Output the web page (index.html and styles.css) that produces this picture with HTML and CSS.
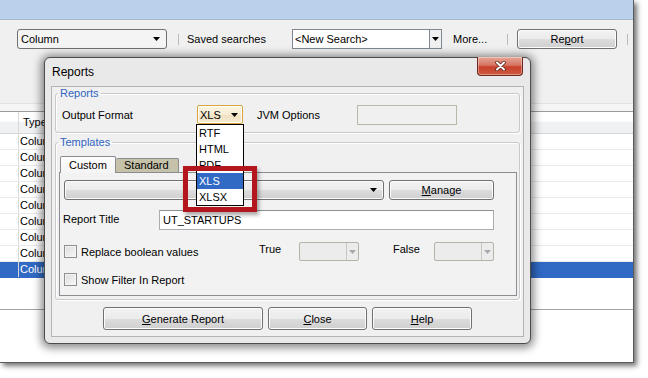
FILE: index.html
```html
<!DOCTYPE html>
<html lang="en">
<head>
    <meta charset="UTF-8">
    <title>Reports</title>
    <link rel="stylesheet" href="styles.css">
</head>
<body>
<div class="shot">
    <div class="window">
        <div class="caption"></div>

        <div class="toolbar">
            <div class="combo combo-column">
                <span class="combo-text">Column</span>
                <svg class="arrow" width="7" height="4" viewBox="0 0 7 4"><path d="M0 0h7L3.5 4z"/></svg>
            </div>
            <span class="sep sep-first"></span>
            <span class="tb-text saved">Saved searches</span>
            <div class="search">
                <span class="search-text">&lt;New Search&gt;</span>
                <span class="search-drop">
                    <svg class="arrow" width="7" height="4" viewBox="0 0 7 4"><path d="M0 0h7L3.5 4z"/></svg>
                </span>
            </div>
            <span class="tb-text more">More...</span>
            <span class="sep sep-report"></span>
            <button class="btn tb-report">Re<u>p</u>ort</button>
            <span class="sep sep-end"></span>
        </div>
        <div class="strip"></div>

        <div class="grid">
            <div class="grid-row grid-head"><span class="cell mark"></span><span class="cell">Type</span></div>
            <div class="grid-row"><span class="cell mark"></span><span class="cell">Column</span></div>
            <div class="grid-row"><span class="cell mark"></span><span class="cell">Column</span></div>
            <div class="grid-row"><span class="cell mark"></span><span class="cell">Column</span></div>
            <div class="grid-row"><span class="cell mark"></span><span class="cell">Column</span></div>
            <div class="grid-row"><span class="cell mark"></span><span class="cell">Column</span></div>
            <div class="grid-row"><span class="cell mark"></span><span class="cell">Column</span></div>
            <div class="grid-row"><span class="cell mark"></span><span class="cell">Column</span></div>
            <div class="grid-row"><span class="cell mark"></span><span class="cell">Column</span></div>
            <div class="grid-row selected"><span class="cell mark"></span><span class="cell">Column</span></div>
            <div class="grid-fill"></div>
        </div>
        <div class="window-foot"></div>
    </div>

    <div class="dialog">
        <div class="dialog-title">
            Reports
            <button class="close-btn">
                <svg width="11" height="10" viewBox="0 0 11 10">
                    <path d="M2 1.5l7 7M9 1.5l-7 7" stroke="#5b2118" stroke-width="3.6" stroke-linecap="round"/>
                    <path d="M2 1.5l7 7M9 1.5l-7 7" stroke="#fff" stroke-width="2" stroke-linecap="round"/>
                </svg>
            </button>
        </div>

        <div class="dialog-client">
            <fieldset class="group group-reports">
                <legend>Reports</legend>
                <div class="form-row">
                    <span class="lbl lbl-format">Output Format</span>
                    <div class="select-xls">
                        <span>XLS</span>
                        <svg class="arrow" width="7" height="4" viewBox="0 0 7 4"><path d="M0 0h7L3.5 4z"/></svg>
                        <ul class="droplist">
                            <li>RTF</li>
                            <li>HTML</li>
                            <li>PDF</li>
                            <li class="picked">XLS</li>
                            <li>XLSX</li>
                        </ul>
                    </div>
                    <span class="lbl lbl-jvm">JVM Options</span>
                    <div class="textbox jvm"></div>
                </div>
            </fieldset>

            <fieldset class="group group-templates">
                <legend>Templates</legend>
                <div class="tabs">
                    <span class="tab active">Custom</span>
                    <span class="tab">Standard</span>
                </div>
                <div class="tab-panel">
                    <div class="panel-row">
                        <div class="combo combo-template">
                            <span class="combo-text"></span>
                            <svg class="arrow" width="7" height="4" viewBox="0 0 7 4"><path d="M0 0h7L3.5 4z"/></svg>
                        </div>
                        <button class="btn btn-manage"><u>M</u>anage</button>
                    </div>
                    <div class="panel-row row-title">
                        <span class="lbl lbl-title">Report Title</span>
                        <div class="textbox title-input">UT_STARTUPS</div>
                    </div>
                    <div class="panel-row row-bool">
                        <span class="check"></span>
                        <span class="check-label wide">Replace boolean values</span>
                        <span class="lbl lbl-true">True</span>
                        <div class="combo-off">
                            <span class="off-drop">
                                <svg width="7" height="4" viewBox="0 0 7 4"><path d="M0 0h7L3.5 4z" fill="#a9a9a9"/></svg>
                            </span>
                        </div>
                        <span class="lbl lbl-false">False</span>
                        <div class="combo-off">
                            <span class="off-drop">
                                <svg width="7" height="4" viewBox="0 0 7 4"><path d="M0 0h7L3.5 4z" fill="#a9a9a9"/></svg>
                            </span>
                        </div>
                    </div>
                    <div class="panel-row row-filter">
                        <span class="check"></span>
                        <span class="check-label">Show Filter In Report</span>
                    </div>
                </div>
            </fieldset>

            <div class="actions">
                <button class="btn btn-generate"><u>G</u>enerate Report</button>
                <button class="btn btn-close"><u>C</u>lose</button>
                <button class="btn btn-help"><u>H</u>elp</button>
            </div>
        </div>

        <div class="highlight"></div>
    </div>
</div>
</body>
</html>
```

FILE: styles.css
```css
* {
    box-sizing: border-box;
}

body {
    margin: 0;
    background-color: #ffffff;
    font-family: 'Liberation Sans', Arial, sans-serif;
    font-size: 11px;
    color: #000000;
}

.shot {
    position: relative;
    width: 648px;
    height: 378px;
    overflow: hidden;
}

/* main window behind the dialog */
.window {
    width: 634px;
    height: 363px;
    display: flex;
    flex-direction: column;
    background-color: #ffffff;
    border-right: 1px solid #5c5c5c;
    border-bottom: 1px solid #5c5c5c;
    box-shadow: 3px 3px 5px rgba(0, 0, 0, 0.55);
}

.caption {
    flex: none;
    height: 20px;
    background-color: #b9d1ea;
    border-bottom: 1px solid #aab9c9;
}

.toolbar {
    flex: none;
    height: 84px;
    display: flex;
    align-items: flex-start;
    padding: 9px 0 0 17px;
    background-color: #f0f0f0;
    border-bottom: 1px solid #e2e2e2;
}

.arrow {
    display: block;
    fill: #000000;
}

.combo {
    display: flex;
    align-items: center;
    justify-content: space-between;
    height: 20px;
    padding: 0 3px 0 3px;
    border: 1px solid #707070;
    border-radius: 3px;
    background: linear-gradient(#f2f2f2 0%, #ebebeb 50%, #dddddd 51%, #cfcfcf 100%);
    box-shadow: inset 0 0 0 1px #fbfbfb;
}

.combo-column {
    flex: none;
    width: 150px;
    background: #f4f4f4;
    box-shadow: none;
}

.combo-column .arrow {
    margin-right: 3px;
}

.sep {
    flex: none;
    width: 1px;
    height: 11px;
    margin-top: 5px;
    background-color: #b9b9b9;
}

.sep-first {
    margin-left: 11px;
    margin-right: 8px;
}

.tb-text {
    flex: none;
    line-height: 20px;
}

.saved {
    width: 105px;
}

.search {
    flex: none;
    display: flex;
    width: 150px;
    height: 20px;
}

.search-text {
    flex: 1;
    padding-left: 2px;
    line-height: 18px;
    background-color: #ffffff;
    border: 1px solid #7f8790;
}

.search-drop {
    width: 12px;
    display: flex;
    align-items: center;
    justify-content: center;
    background-color: #f0f0f0;
    border: 1px solid #7f8790;
    border-left: none;
}

.more {
    width: 44px;
    margin-left: 11px;
    white-space: nowrap;
}

.sep-report {
    margin-left: 10px;
    margin-right: 9px;
}

.sep-end {
    margin-left: 10px;
}

.btn {
    display: flex;
    align-items: center;
    justify-content: center;
    height: 20px;
    padding: 0;
    font-family: 'Liberation Sans', Arial, sans-serif;
    font-size: 11px;
    color: #000000;
    border: 1px solid #707070;
    border-radius: 3px;
    background: linear-gradient(#f2f2f2 0%, #ebebeb 50%, #dddddd 51%, #cfcfcf 100%);
    box-shadow: inset 0 0 0 1px #fcfcfc;
}

.tb-report {
    flex: none;
    width: 100px;
}

.strip {
    flex: none;
    height: 8px;
    background-color: #f5f5f5;
    border-bottom: 1px solid #9c9c9c;
}

/* grid */
.grid {
    flex: none;
    display: flex;
    flex-direction: column;
}

.grid-row {
    display: flex;
    height: 16px;
    border-bottom: 1px solid #eaeaea;
    line-height: 15px;
}

.grid-head {
    height: 22px;
    line-height: 20px;
    background: linear-gradient(#ffffff 0%, #ffffff 45%, #f1f2f4 46%, #eef0f2 100%);
    border-bottom: 1px solid #d5d5d5;
}

.cell {
    padding-left: 1px;
}

.grid-head .cell {
    padding-left: 4px;
}

.mark {
    width: 19px;
    padding: 0;
    border-right: 1px solid #d8d8d8;
}

.selected {
    background-color: #316ac5;
    color: #ffffff;
    border-bottom-color: #316ac5;
}

.grid-fill {
    height: 32px;
    border-bottom: 1px solid #a3a3a3;
}

.window-foot {
    flex: 1;
}

/* dialog */
.dialog {
    position: absolute;
    left: 44px;
    top: 57px;
    width: 487px;
    height: 287px;
    display: flex;
    flex-direction: column;
    padding: 0 6px 6px 6px;
    background-color: #e9e9e9;
    border: 1px solid #4c4c4c;
    border-radius: 6px;
    box-shadow: 0 1px 9px 3px rgba(0, 0, 0, 0.45);
}

.dialog-title {
    position: relative;
    flex: none;
    height: 28px;
    display: flex;
    align-items: center;
    padding-left: 1px;
    font-size: 12px;
}

.close-btn {
    position: absolute;
    top: -1px;
    right: 1px;
    width: 46px;
    height: 19px;
    display: flex;
    align-items: center;
    justify-content: center;
    padding: 0;
    border: 1px solid #6b2a22;
    border-top: none;
    border-radius: 0 0 4px 4px;
    background: linear-gradient(#e6a697 0%, #d77563 45%, #c7402c 55%, #cf5a3f 100%);
    box-shadow: inset 0 0 0 1px rgba(255, 255, 255, 0.35);
}

.dialog-client {
    flex: 1;
    display: flex;
    flex-direction: column;
    background-color: #f0f0f0;
    border: 1px solid #b4b4b4;
}

.group {
    margin: 0 3px;
    padding: 0;
    min-width: 0;
    border: 1px solid #c9c9c9;
    border-radius: 3px;
    box-shadow: inset 1px 1px 0 #ffffff, 1px 1px 0 #ffffff;
}

.group legend {
    margin-left: 2px;
    padding: 0 2px;
    line-height: 13px;
    color: #2f63c0;
}

.form-row {
    display: flex;
    align-items: center;
    height: 20px;
    margin: 5px 0 7px 6px;
}

.lbl-format {
    width: 135px;
}

.select-xls {
    position: relative;
    width: 46px;
    height: 19px;
    margin-top: -1px;
    display: flex;
    align-items: center;
    justify-content: space-between;
    padding: 0 4px 0 2px;
    border: 1px solid #d9a53e;
    border-radius: 2px;
    background: linear-gradient(#fdf5e2 0%, #f7ecd2 50%, #efe1c0 51%, #f6ebd1 100%);
    box-shadow: inset 0 0 0 1px #fffdf6;
}

.droplist {
    position: absolute;
    left: -2px;
    top: 18px;
    z-index: 5;
    width: 48px;
    margin: 0;
    padding: 0;
    list-style: none;
    background-color: #ffffff;
    border: 1px solid #000000;
}

.droplist li {
    height: 16px;
    padding-left: 2px;
    line-height: 16px;
}

.droplist .picked {
    background-color: #316ac5;
    color: #ffffff;
}

.lbl-jvm {
    width: 100px;
    margin-left: 14px;
}

.textbox {
    height: 20px;
    padding-left: 3px;
    line-height: 18px;
    border: 1px solid #abadb3;
    border-top-color: #8d8f95;
    background-color: #ffffff;
}

.jvm {
    width: 100px;
    background-color: #f0f0f0;
    border-color: #b8b8a8;
}

.group-templates {
    margin-top: 3px;
    padding-bottom: 3px;
}

.tabs {
    display: flex;
    align-items: flex-end;
    height: 16px;
    margin: 7px 0 0 4px;
}

.tab {
    height: 14px;
    padding: 0 8px;
    line-height: 13px;
    background-color: #c6c2aa;
    border: 1px solid #8b8d93;
    border-bottom: none;
    border-left: none;
    border-radius: 2px 2px 0 0;
    width: 63px;
}

.tab.active {
    position: relative;
    z-index: 2;
    width: 56px;
    height: 17px;
    margin-bottom: -1px;
    line-height: 16px;
    background: linear-gradient(#fdfdfd, #f4f4f4);
    border-left: 1px solid #8b8d93;
}

.tab-panel {
    position: relative;
    height: 124px;
    margin: 0 2px 0 3px;
    padding: 6px 0 0 4px;
    background-color: #f2f2f2;
    border: 1px solid #8b8d93;
}

.panel-row {
    display: flex;
    align-items: center;
}

.combo-template {
    width: 320px;
    padding-right: 6px;
}

.btn-manage {
    width: 105px;
    height: 20px;
    margin: 1px 0 0 5px;
}

.row-title {
    margin-top: 10px;
}

.lbl-title {
    width: 96px;
    padding-left: 0;
    margin-left: -1px;
    margin-top: -3px;
}

.title-input {
    width: 335px;
}

.row-bool {
    margin-top: 12px;
    height: 19px;
}

.check {
    flex: none;
    width: 13px;
    height: 13px;
    border: 1px solid #8e8f8f;
    background: linear-gradient(135deg, #dcdcdc, #f8f8f8);
    box-shadow: inset 0 0 0 1px #f4f4f4;
}

.check-label {
    margin-left: 4px;
}

.check-label.wide {
    width: 178px;
}

.lbl-true {
    width: 40px;
    margin-top: -6px;
}

.lbl-false {
    width: 41px;
    margin-left: 34px;
    margin-top: -6px;
}

.combo-off {
    display: flex;
    justify-content: flex-end;
    width: 60px;
    height: 19px;
    border: 1px solid #b3b3a6;
    border-radius: 2px;
    background-color: #ececec;
}

.off-drop {
    width: 12px;
    display: flex;
    align-items: center;
    justify-content: center;
    border-left: 1px solid #c8c8c0;
}

.row-filter {
    margin-top: 12px;
}

.actions {
    display: flex;
    justify-content: center;
    gap: 5px;
    margin-top: 7px;
}

.actions .btn {
    height: 23px;
}

.btn-generate {
    width: 160px;
}

.btn-close {
    width: 99px;
}

.btn-help {
    width: 100px;
}

/* red callout around the chosen format */
.highlight {
    position: absolute;
    left: 138px;
    top: 108px;
    z-index: 6;
    width: 74px;
    height: 46px;
    border: 5px solid #b3161d;
    box-shadow: 2px 3px 4px rgba(0, 0, 0, 0.35);
}
```
